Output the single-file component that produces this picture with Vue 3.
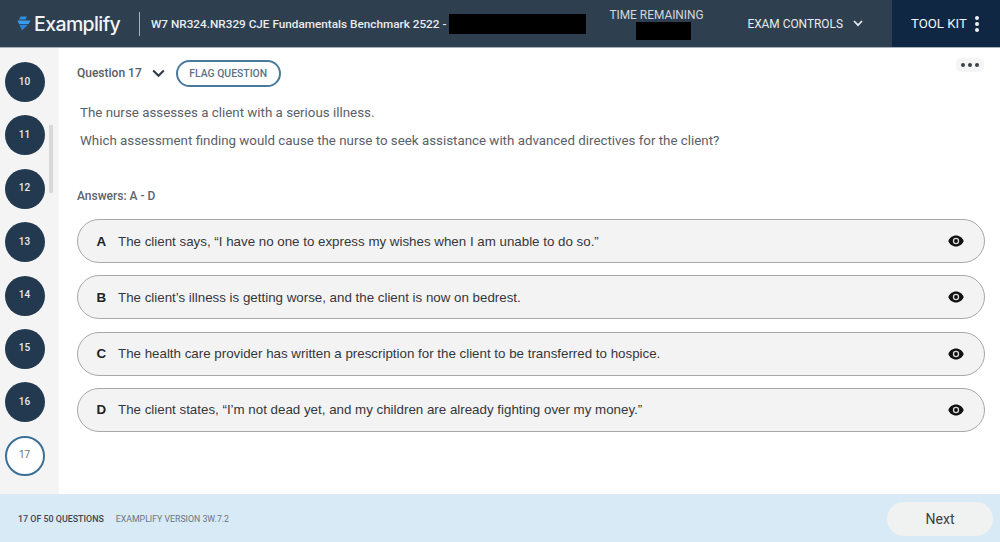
<script setup>
const sideNumbers = [10, 11, 12, 13, 14, 15, 16]

const answers = [
  { letter: 'A', text: 'The client says, “I have no one to express my wishes when I am unable to do so.”' },
  { letter: 'B', text: 'The client’s illness is getting worse, and the client is now on bedrest.' },
  { letter: 'C', text: 'The health care provider has written a prescription for the client to be transferred to hospice.' },
  { letter: 'D', text: 'The client states, “I’m not dead yet, and my children are already fighting over my money.”' }
]
</script>

<template>
  <div class="page">
    <header class="topbar">
      <div class="logo">
        <svg class="logo-mark" width="15" height="15" viewBox="0 0 15 15">
          <path d="M4.5 0.5 H11 L9.6 3.6 H3 Z" fill="#2f8fe0" />
          <path d="M1.5 4.4 H14.5 L12.6 8 H3 Z" fill="#3b9cec" />
          <path d="M3.4 8.8 H12 L6 14.5 Z" fill="#2a84d8" />
        </svg>
        <span class="logo-text">Examplify</span>
      </div>
      <div class="divider"></div>
      <div class="exam-title">W7 NR324.NR329 CJE Fundamentals Benchmark 2522 -</div>
      <div class="redact-name"></div>
      <div class="timer">
        <span>TIME REMAINING</span>
        <div class="redact-time"></div>
      </div>
      <div class="controls">
        <span>EXAM CONTROLS</span>
        <svg width="10" height="7" viewBox="0 0 10 7">
          <path d="M1 1 L5 5.2 L9 1" fill="none" stroke="#e6eaee" stroke-width="1.7" />
        </svg>
      </div>
      <div class="toolkit">
        <span>TOOL KIT</span>
        <div class="dots">
          <i></i><i></i><i></i>
        </div>
      </div>
    </header>

    <div class="middle">
      <aside class="sidebar">
        <div v-for="n in sideNumbers" :key="n" class="num">{{ n }}</div>
        <div class="num current">17</div>
        <div class="scroll-thumb"></div>
      </aside>

      <main class="content">
        <div class="question-row">
          <span class="question-label">Question 17</span>
          <svg class="question-chevron" width="13" height="9" viewBox="0 0 13 9">
            <path d="M1.2 1.5 L6.5 6.8 L11.8 1.5" fill="none" stroke="#2e3b49" stroke-width="2" />
          </svg>
          <button class="flag">FLAG QUESTION</button>
          <div class="more"><i></i><i></i><i></i></div>
        </div>

        <p class="stem first">The nurse assesses a client with a serious illness.</p>
        <p class="stem">Which assessment finding would cause the nurse to seek assistance with advanced directives for the client?</p>

        <div class="answers-label">Answers: A - D</div>

        <div class="answers">
          <div v-for="a in answers" :key="a.letter" class="answer">
            <span class="letter">{{ a.letter }}</span>
            <span class="answer-text">{{ a.text }}</span>
            <svg class="eye" width="16" height="12" viewBox="0 0 16 12">
              <path d="M8 0.5 C4.4 0.5 1.6 2.8 0.3 6 C1.6 9.2 4.4 11.5 8 11.5 C11.6 11.5 14.4 9.2 15.7 6 C14.4 2.8 11.6 0.5 8 0.5 Z" fill="#111" />
              <circle cx="8" cy="6" r="3.2" fill="#ddd" />
              <circle cx="8" cy="6" r="1.9" fill="#111" />
            </svg>
          </div>
        </div>
      </main>
    </div>

    <footer class="footer">
      <span class="count">17 OF 50 QUESTIONS</span>
      <span class="version">EXAMPLIFY VERSION 3W.7.2</span>
      <button class="next">Next</button>
    </footer>
  </div>
</template>

<style>
html, body {
  margin: 0;
  overflow: hidden;
}
</style>

<style scoped>
.page {
  width: 1000px;
  height: 542px;
  display: flex;
  flex-direction: column;
  font-family: Roboto, "Liberation Sans", sans-serif;
  background: #fff;
}

.topbar {
  height: 47px;
  flex: none;
  display: flex;
  align-items: center;
  background: #2e3f50;
  border-bottom: 1px solid #a9b1b9;
  color: #e8ecef;
}

.logo {
  display: flex;
  align-items: center;
  margin-left: 16px;
  width: 123px;
}

.logo-mark {
  margin-right: 3px;
}

.logo-text {
  font-family: Inter, sans-serif;
  font-size: 19.5px;
  font-weight: 500;
  letter-spacing: -0.6px;
  color: #f2f4f6;
}

.divider {
  width: 1px;
  height: 24px;
  background: #aab3bb;
}

.exam-title {
  margin-left: 11px;
  font-size: 11.75px;
  font-weight: 500;
  white-space: nowrap;
}

.redact-name {
  width: 137px;
  height: 20px;
  margin-left: 3px;
  background: #000;
}

.timer {
  width: 93px;
  margin-left: 23px;
  align-self: flex-start;
  padding-top: 8px;
  font-size: 11.9px;
  color: #d3d8dc;
  white-space: nowrap;
}

.redact-time {
  width: 55px;
  height: 18px;
  margin: 0 0 0 27px;
  background: #000;
}

.controls {
  display: flex;
  align-items: center;
  gap: 10px;
  margin-left: 45px;
  width: 144px;
  font-size: 11.9px;
}

.toolkit {
  margin-left: auto;
  width: 108px;
  height: 47px;
  display: flex;
  align-items: center;
  background: #0f2743;
  font-size: 13.2px;
  color: #f5f7f8;
  box-sizing: border-box;
  padding-left: 19px;
  gap: 8px;
}

.dots {
  display: flex;
  flex-direction: column;
  gap: 2px;
}

.dots i {
  width: 4px;
  height: 4px;
  border-radius: 50%;
  background: #eef1f3;
}

.middle {
  flex: 1;
  display: flex;
  min-height: 0;
}

.sidebar {
  position: relative;
  width: 59px;
  flex: none;
  background: #f4f4f4;
  box-sizing: border-box;
  padding: 14px 0 0 5px;
  display: flex;
  flex-direction: column;
  gap: 13.4px;
}

.num {
  width: 40px;
  height: 40px;
  box-sizing: border-box;
  padding: 0 1px 2px 0;
  border-radius: 50%;
  background: #23394f;
  color: #e8ecef;
  font-size: 10px;
  font-weight: 500;
  display: flex;
  align-items: center;
  justify-content: center;
}

.num.current {
  background: #fff;
  border: 2px solid #3d7096;
  color: #6a7178;
  font-weight: 400;
}

.scroll-thumb {
  position: absolute;
  left: 49px;
  top: 77px;
  width: 4px;
  height: 68px;
  background: #d8d8d8;
}

.content {
  flex: 1;
  padding-left: 18px;
  padding-right: 15px;
}

.question-row {
  display: flex;
  align-items: center;
  height: 26px;
  margin-top: 12px;
  position: relative;
}

.question-label {
  font-size: 12px;
  font-weight: 500;
  color: #555d66;
}

.question-chevron {
  margin-left: 10px;
}

.flag {
  margin-left: 11px;
  width: 105px;
  height: 27px;
  border: 2px solid #4a7a9c;
  border-radius: 14px;
  background: #fff;
  font-family: inherit;
  font-size: 10.4px;
  font-weight: 500;
  color: #5e7286;
  padding: 0;
}

.more {
  position: absolute;
  right: 1px;
  top: -2px;
  width: 28px;
  height: 14px;
  border-radius: 5px;
  background: #f5f5f5;
  display: flex;
  align-items: center;
  justify-content: center;
  gap: 3px;
}

.more i {
  width: 4px;
  height: 4px;
  border-radius: 50%;
  background: #3a4148;
}

.stem {
  margin: 0;
  padding-left: 3px;
  font-size: 13.33px;
  line-height: 20px;
  color: #5a6168;
}

.stem.first {
  margin-top: 17px;
  margin-bottom: 8px;
}

.answers-label {
  margin-top: 38px;
  font-size: 12px;
  font-weight: 500;
  line-height: 14px;
  color: #5d646c;
}

.answers {
  margin-top: 16px;
  display: flex;
  flex-direction: column;
  gap: 12.3px;
}

.answer {
  height: 44px;
  box-sizing: border-box;
  border: 1.5px solid #a8a8a8;
  border-radius: 22px;
  background: #f3f3f3;
  display: flex;
  align-items: center;
  padding: 0 20px 0 18.5px;
  font-family: "Liberation Sans", Arial, sans-serif;
  font-size: 13.33px;
  color: #33373b;
}

.letter {
  width: 21.5px;
  font-weight: 700;
  font-size: 13.33px;
  color: #222;
}

.answer-text {
  flex: 1;
}

.footer {
  height: 48px;
  flex: none;
  box-sizing: border-box;
  display: flex;
  align-items: center;
  background: #d8eaf6;
  padding: 2px 7px 0 18px;
}

.count {
  font-size: 8.9px;
  font-weight: 500;
  color: #3f464d;
}

.version {
  margin-left: 12px;
  font-size: 8.75px;
  color: #6b7580;
}

.next {
  margin-left: auto;
  width: 106px;
  height: 34px;
  border: none;
  border-radius: 17px;
  background: #f0f1f1;
  font-family: inherit;
  font-size: 14px;
  color: #3a3f44;
  padding: 0;
}
</style>
